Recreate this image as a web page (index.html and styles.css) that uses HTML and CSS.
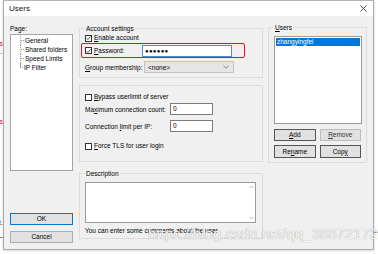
FILE: index.html
```html
<!DOCTYPE html>
<html lang="en">
<head>
    <meta charset="UTF-8">
    <title>Users</title>
    <link rel="stylesheet" href="styles.css">
</head>
<body>
    <!-- bits of the page behind the dialog -->
    <div class="strip strip-left">
        <div class="frag red f1"><span>es</span></div>
        <div class="frag red f2"><span>1.</span></div>
        <div class="frag red f3"><span>as</span></div>
        <div class="frag f4"><span>t.</span></div>
        <div class="hline l1"></div>
    </div>

    <div class="window">
        <div class="titlebar">
            <span class="title">Users</span>
            <svg class="close" width="7" height="7" viewBox="0 0 7 7"><path d="M0.5 0.5L6.5 6.5M6.5 0.5L0.5 6.5" stroke="#333" stroke-width="0.9"/></svg>
        </div>

        <div class="content">
            <div class="col-page">
                <div class="page-label">Page:</div>
                <div class="tree">
                    <div class="tree-item"><span class="twig"></span><span class="node sel">General</span></div>
                    <div class="tree-item"><span class="twig"></span><span class="node">Shared folders</span></div>
                    <div class="tree-item"><span class="twig"></span><span class="node">Speed Limits</span></div>
                    <div class="tree-item last"><span class="twig"></span><span class="node">IP Filter</span></div>
                </div>
                <button class="btn btn-ok">OK</button>
                <button class="btn btn-cancel">Cancel</button>
            </div>

            <div class="col-main">
                <fieldset class="group g-account">
                    <legend>Account settings</legend>
                    <div class="row row-check">
                        <span class="cb on"><svg width="6" height="6" viewBox="0 0 6 6"><path d="M0.6 3.1L2.3 4.8L5.4 0.9" fill="none" stroke="#222" stroke-width="0.9"/></svg></span>
                        <span><u>E</u>nable account</span>
                    </div>
                    <div class="row row-pass">
                        <div class="field-label pass-label">
                            <span class="cb on"><svg width="6" height="6" viewBox="0 0 6 6"><path d="M0.6 3.1L2.3 4.8L5.4 0.9" fill="none" stroke="#222" stroke-width="0.9"/></svg></span>
                            <span><u>P</u>assword:</span>
                        </div>
                        <div class="input pass-input">●●●●●●</div>
                    </div>
                    <div class="row row-group">
                        <div class="field-label"><span><u>G</u>roup membership:</span></div>
                        <div class="select">
                            <span>&lt;none&gt;</span>
                            <svg width="6" height="4" viewBox="0 0 6 4"><path d="M0.5 0.8L3 3.2L5.5 0.8" fill="none" stroke="#666" stroke-width="0.8"/></svg>
                        </div>
                    </div>
                </fieldset>

                <fieldset class="group g-limits">
                    <div class="row row-check">
                        <span class="cb"></span>
                        <span><u>B</u>ypass userlimit of server</span>
                    </div>
                    <div class="row row-num first-num">
                        <div class="field-label num-label"><span>Ma<u>x</u>imum connection count:</span></div>
                        <div class="input num-input">0</div>
                    </div>
                    <div class="row row-num second-num">
                        <div class="field-label num-label"><span>Connection <u>l</u>imit per IP:</span></div>
                        <div class="input num-input">0</div>
                    </div>
                    <div class="row row-check tls">
                        <span class="cb"></span>
                        <span><u>F</u>orce TLS for user login</span>
                    </div>
                </fieldset>

                <fieldset class="group g-desc">
                    <legend>Description</legend>
                    <div class="textarea">
                        <div class="scroll">
                            <svg width="5" height="4" viewBox="0 0 5 4"><path d="M0.5 3L2.5 1L4.5 3" fill="none" stroke="#aaa" stroke-width="0.8"/></svg>
                            <svg width="5" height="4" viewBox="0 0 5 4"><path d="M0.5 1L2.5 3L4.5 1" fill="none" stroke="#aaa" stroke-width="0.8"/></svg>
                        </div>
                    </div>
                    <div class="hint">You can enter some comments about the user</div>
                </fieldset>
            </div>

            <div class="col-users">
                <fieldset class="group g-users">
                    <legend><u>U</u>sers</legend>
                    <div class="user-list">
                        <div class="user sel">zhangyingfei</div>
                    </div>
                    <div class="btn-row first-row">
                        <button class="btn btn-dark"><u>A</u>dd</button>
                        <button class="btn btn-light"><u>R</u>emove</button>
                    </div>
                    <div class="btn-row second-row">
                        <button class="btn btn-dark">Re<u>n</u>ame</button>
                        <button class="btn btn-dark">Cop<u>y</u></button>
                    </div>
                </fieldset>
            </div>
        </div>
    </div>

    <div class="strip strip-right">
        <div class="hline l2"></div>
    </div>

    <div class="watermark">https://blog.csdn.net/qq_38872172</div>
</body>
</html>
```

FILE: styles.css
```css
* {
    box-sizing: border-box;
}
body {
    margin: 0;
    width: 378px;
    height: 254px;
    overflow: hidden;
    position: relative;
    background: #fff;
    font-family: 'Liberation Sans', Arial, sans-serif;
    font-size: 6.5px;
    color: #000;
    display: flex;
}
u {
    text-decoration: underline;
    text-underline-offset: 1px;
}

/* page behind */
.strip {
    flex: none;
    overflow: hidden;
}
.strip-left {
    width: 3px;
}
.strip-right {
    width: 4px;
}
.frag {
    display: flex;
    justify-content: flex-end;
    white-space: nowrap;
    height: 8px;
    line-height: 8px;
    font-size: 7px;
}
.red {
    color: #e02020;
}
.f1 { margin-top: 40px; }
.f2 { margin-top: 0; }
.f3 { margin-top: 62px; }
.f4 { margin-top: 93px; color: #333; }
.hline {
    height: 1px;
    background: #8a8a8a;
}
.l1 { margin-top: 10px; }
.l2 { margin-top: 232px; }

/* dialog */
.window {
    flex: none;
    width: 371px;
    height: 250px;
    border: 1px solid #a9a9a9;
    border-top-color: #b5b5b5;
    background: #f0f0f0;
    display: flex;
    flex-direction: column;
    box-shadow: 0 1px 3px rgba(0, 0, 0, 0.15);
}
.titlebar {
    height: 15px;
    background: #fff;
    display: flex;
    align-items: center;
    justify-content: space-between;
    padding: 0 6px 0 5px;
    flex: none;
}
.title {
    font-size: 8px;
    color: #111;
}
.content {
    display: flex;
    padding: 7px 0 0 6px;
}

/* left column */
.col-page {
    width: 63px;
    display: flex;
    flex-direction: column;
}
.page-label {
    height: 9px;
    line-height: 9px;
    margin-top: 1px;
}
.tree {
    margin-top: 1px;
    height: 137px;
    background: #fff;
    border: 1px solid #a5a5a5;
    padding: 1px 0 0 9px;
}
.tree-item {
    display: flex;
    align-items: center;
    height: 9px;
    border-left: 1px dotted #9a9a9a;
}
.tree-item.last {
    border-left: none;
    padding-left: 1px;
    background: linear-gradient(#9a9a9a, #9a9a9a) left top / 1px 50% no-repeat;
}
.twig {
    width: 3px;
    border-top: 1px dotted #9a9a9a;
    margin-right: 1px;
}
.tree-item.last .twig {
    margin-left: -1px;
}
.node {
    line-height: 9px;
    white-space: nowrap;
}
.btn {
    font-family: inherit;
    font-size: 6.5px;
    color: #000;
    background: #e1e1e1;
    border: 1px solid #adadad;
    padding: 0;
    margin: 0;
    height: 12px;
    line-height: 10px;
}
.btn-ok {
    margin-top: 42px;
    border-color: #0078d7;
}
.btn-cancel {
    margin-top: 6px;
}

/* middle column */
.col-main {
    width: 184px;
    margin-left: 6px;
    display: flex;
    flex-direction: column;
}
.group {
    margin: 0;
    min-width: 0;
    border: 1px solid #dcdcdc;
    padding: 0 4px 0 5px;
}
.group legend {
    padding: 0 1px;
    line-height: 9px;
    height: 9px;
}
.row {
    display: flex;
    align-items: center;
}
.row-check {
    height: 8px;
    line-height: 8px;
    margin-top: 1px;
}
.cb {
    width: 7px;
    height: 7px;
    border: 1px solid #333;
    background: #fff;
    margin-right: 2px;
    display: flex;
    align-items: center;
    justify-content: center;
    flex: none;
}
.field-label {
    width: 59px;
    flex: none;
    display: flex;
    align-items: center;
    white-space: nowrap;
}
.g-account {
    margin-top: 1px;
    height: 54px;
}
.row-pass {
    margin: 1px 0 0 -4px;
    width: 164px;
    height: 15px;
    border: 1.5px solid #e81123;
    border-radius: 2px;
    padding-left: 3px;
}
.pass-label {
    width: 57px;
}
.input {
    background: #fff;
    border: 1px solid #7a7a7a;
    height: 12px;
    line-height: 10px;
    padding-left: 2px;
}
.pass-input {
    width: 90px;
    border-color: #4a90d9;
    font-size: 6px;
    letter-spacing: 0.3px;
}
.row-group {
    margin-top: 3px;
}
.select {
    width: 90px;
    height: 12px;
    background: #e5e5e5;
    border: 1px solid #c4c4c4;
    display: flex;
    align-items: center;
    justify-content: space-between;
    padding: 0 4px 0 3px;
}

.g-limits {
    margin-top: 7px;
    height: 77px;
    padding-top: 7px;
}
.g-limits .row-check {
    margin-top: 0;
}
.num-label {
    width: 85px;
}
.num-input {
    width: 43px;
}
.row-num {
    height: 12px;
}
.first-num {
    margin-top: 2px;
}
.second-num {
    margin-top: 5px;
}
.g-limits .tls {
    margin-top: 10px;
}

.g-desc {
    margin-top: 7px;
    height: 70px;
}
.textarea {
    margin-top: 4px;
    width: 171px;
    height: 41px;
    background: #fff;
    border: 1px solid #9b9b9b;
    display: flex;
    justify-content: flex-end;
}
.scroll {
    width: 7px;
    display: flex;
    flex-direction: column;
    justify-content: space-between;
    align-items: center;
    padding: 2px 0;
}
.hint {
    margin-top: 4px;
    height: 8px;
    line-height: 8px;
    white-space: nowrap;
}

/* right column */
.col-users {
    width: 99px;
    margin-left: 5px;
}
.g-users {
    height: 140px;
}
.user-list {
    margin-top: 4px;
    height: 88px;
    background: #fff;
    border: 1px solid #9b9b9b;
    padding: 1px 0 0 1px;
}
.user {
    height: 8px;
    line-height: 8px;
    padding-left: 1px;
    margin-right: 1px;
}
.user.sel {
    background: #0078d7;
    color: #fff;
}
.btn-row {
    display: flex;
    gap: 4px;
    width: 87px;
}
.btn-row .btn {
    flex: 1;
}
.first-row {
    margin-top: 5px;
}
.second-row {
    margin-top: 4px;
}
.second-row .btn {
    height: 13px;
}
.btn-dark {
    border-color: #555;
}
.btn-light {
    border-color: #bdbdbd;
    color: #333;
}

/* screenshot watermark */
.watermark {
    position: absolute;
    left: 148px;
    top: 224px;
    font-size: 15px;
    line-height: 20px;
    color: rgba(255, 255, 255, 0.92);
    text-shadow: 0 0 1px rgba(0, 0, 0, 0.45);
    white-space: nowrap;
}
```
